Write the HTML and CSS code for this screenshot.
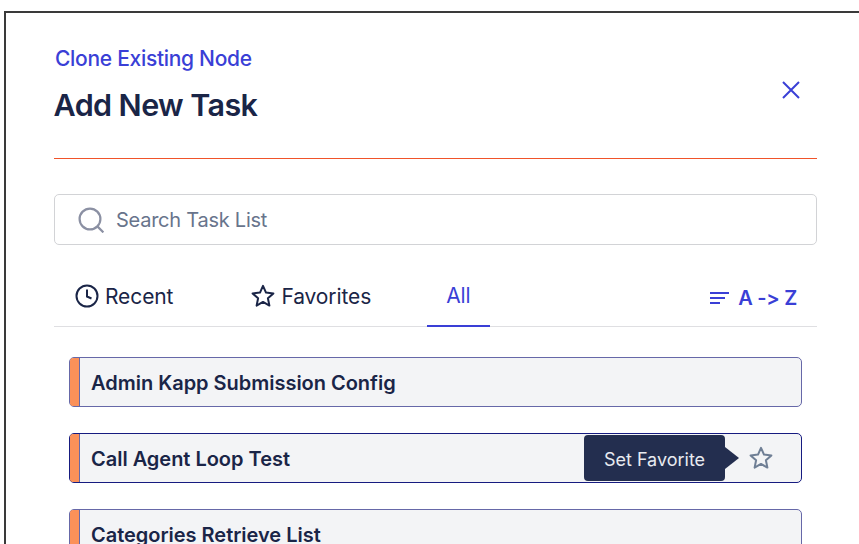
FILE: index.html
```html
<!DOCTYPE html>
<html lang="en">
<head>
<meta charset="utf-8">
<title>Add New Task</title>
<link rel="stylesheet" href="styles.css">
</head>
<body>
<div class="modal">
  <header class="head">
    <div>
      <a class="clone">Clone Existing Node</a>
      <h1 class="title">Add New Task</h1>
    </div>
    <button class="close" aria-label="Close">
      <svg width="20" height="20" viewBox="0 0 20 20" fill="none" stroke="#3a3fd6" stroke-width="2"><path d="M2 2 18 18M18 2 2 18"/></svg>
    </button>
  </header>
  <div class="search">
    <svg width="26" height="26" viewBox="0 0 26 26" fill="none" stroke="#8b90a3" stroke-width="2.2"><circle cx="12" cy="12" r="10.4"/><path d="M19.4 19.4 25.4 25.4"/></svg>
    <span class="placeholder">Search Task List</span>
  </div>
  <nav class="tabs">
    <div class="tab tab-recent">
      <svg width="24" height="24" viewBox="0 0 24 24" fill="none" stroke="#1a2547" stroke-width="2"><circle cx="12" cy="12" r="10.5"/><path d="M12 5.5V12.5L16.5 14.5"/></svg>
      <span>Recent</span>
    </div>
    <div class="tab tab-fav">
      <svg width="24" height="24" viewBox="0 0 24 24" fill="none" stroke="#1a2547" stroke-width="2" stroke-linejoin="round"><path d="M12 1.8 15 8.6 22.4 9.4 16.9 14.3 18.4 21.6 12 17.9 5.6 21.6 7.1 14.3 1.6 9.4 9 8.6Z"/></svg>
      <span>Favorites</span>
    </div>
    <div class="tab tab-all">All</div>
    <div class="sort">
      <svg width="20" height="14" viewBox="0 0 20 14" fill="none" stroke="#3a3fd6" stroke-width="2"><path d="M0 2H19M0 7H15M0 12H10"/></svg>
      <span>A -&gt; Z</span>
    </div>
  </nav>
  <ul class="list">
    <li class="row row-soft"><span class="accent"></span><span class="name">Admin Kapp Submission Config</span></li>
    <li class="row row-hover"><span class="accent"></span><span class="name">Call Agent Loop Test</span>
      <span class="tip">Set Favorite</span>
      <svg class="star" width="24" height="24" viewBox="0 0 24 24" fill="none" stroke="#6f7f95" stroke-width="2" stroke-linejoin="round"><path d="M12 1.8 15 8.6 22.4 9.4 16.9 14.3 18.4 21.6 12 17.9 5.6 21.6 7.1 14.3 1.6 9.4 9 8.6Z"/></svg>
    </li>
    <li class="row row-soft"><span class="accent"></span><span class="name">Categories Retrieve List</span></li>
  </ul>
</div>
</body>
</html>
```
FILE: styles.css
```css
* { box-sizing: border-box; }
html, body { margin: 0; height: 100%; overflow: hidden; background: #fff; }
body { font-family: Inter, "Liberation Sans", sans-serif; color: #1a2547; font-variant-ligatures: none; font-feature-settings: "calt" 0; }
.modal {
  margin: 11px 0 0 4px;
  height: 533px;
  overflow: hidden;
  border-top: 2px solid #3a3a3a;
  border-left: 2px solid #3a3a3a;
  padding: 33px 0 0 48px;
}
.head {
  width: 763px;
  height: 113px;
  border-bottom: 1px solid #f0532a;
  display: flex;
  justify-content: space-between;
}
.clone { display: block; font-size: 21px; line-height: 26px; font-weight: 500; color: #3a3fd6; margin-left: 1px; letter-spacing: -0.3px; }
.title { margin: 13px 0 0 -0.5px; font-size: 30.5px; line-height: 40px; font-weight: 600; letter-spacing: -0.6px; }
.close { border: 0; background: none; padding: 0; margin: 34px 16px 0 0; width: 20px; height: 20px; }
.close svg { display: block; }
.search {
  width: 763px;
  height: 51px;
  margin-top: 35px;
  border: 1.5px solid #d2d3d6;
  border-radius: 5px;
  display: flex;
  align-items: center;
  padding-left: 23px;
  gap: 12px;
}
.placeholder { font-size: 20px; color: #68748c; letter-spacing: -0.25px; }
.tabs {
  width: 763px;
  height: 82px;
  border-bottom: 1.5px solid #dfdfe2;
  display: flex;
}
.tab { display: flex; align-items: center; gap: 6px; height: 82px; padding-top: 38px; padding-bottom: 18px; font-size: 21px; letter-spacing: -0.1px; }
.tab-recent { margin-left: 21px; }
.tab-fav { margin-left: 78px; }
.tab-all {
  margin-left: 56px;
  padding-top: 39px;
  padding-left: 19px;
  padding-right: 19px;
  color: #3a3fd6;
  border-bottom: 2px solid #3a3fd6;
}
.sort {
  margin-left: auto;
  margin-right: 20px;
  display: flex;
  align-items: center;
  gap: 8px;
  padding-top: 23px;
  height: 82px;
  font-size: 20px;
  font-weight: 600;
  letter-spacing: -0.3px;
  color: #3a3fd6;
}
.list { list-style: none; margin: 30px 0 0 15px; padding: 0; width: 733px; display: flex; flex-direction: column; gap: 26px; }
.row {
  height: 50px;
  flex: none;
  display: flex;
  align-items: center;
  position: relative;
  background: #f3f4f6;
  border-radius: 5px;
}
.row-soft { border: 1.5px solid #6668a8; }
.row-hover { border: 1.5px solid #161b80; }
.accent { width: 10px; align-self: stretch; flex: none; background: #fb9159; border-right: 1.5px solid #6668a8; border-radius: 3px 0 0 3px; }
.name { margin: 2px 0 0 11px; font-size: 20px; font-weight: 600; letter-spacing: -0.02px; }
.tip {
  position: absolute;
  left: 514px;
  top: 1px;
  width: 141px;
  height: 46px;
  padding-top: 2px;
  background: #232e4f;
  color: #e8eaf0;
  border-radius: 4px;
  font-size: 18px;
  display: flex;
  align-items: center;
  justify-content: center;
}
.tip::after {
  content: "";
  position: absolute;
  left: 100%;
  top: 12px;
  border-style: solid;
  border-width: 11px 0 11px 14px;
  border-color: transparent transparent transparent #232e4f;
}
.star { position: absolute; left: 679px; top: 12px; }
```
